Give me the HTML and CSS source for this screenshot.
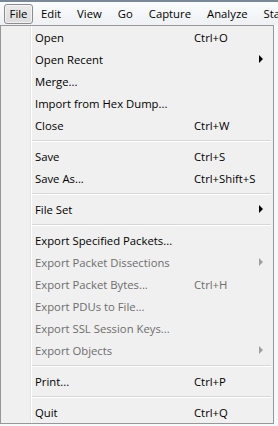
FILE: index.html
```html
<!DOCTYPE html>
<html lang="en">
<head>
    <meta charset="UTF-8">
    <title>File menu</title>
    <link rel="stylesheet" href="styles.css">
</head>
<body>
    <div class="frame"></div>
    <div class="menubar">
        <span class="top-item active">File</span>
        <span class="top-item">Edit</span>
        <span class="top-item">View</span>
        <span class="top-item">Go</span>
        <span class="top-item">Capture</span>
        <span class="top-item">Analyze</span>
        <span class="top-item">Statistics</span>
    </div>
    <div class="menu">
        <div class="item"><span class="label">Open</span><span class="key">Ctrl+O</span></div>
        <div class="item"><span class="label">Open Recent</span><span class="arrow"></span></div>
        <div class="item"><span class="label">Merge...</span></div>
        <div class="item"><span class="label">Import from Hex Dump...</span></div>
        <div class="item"><span class="label">Close</span><span class="key">Ctrl+W</span></div>
        <div class="sep"></div>
        <div class="item"><span class="label">Save</span><span class="key">Ctrl+S</span></div>
        <div class="item"><span class="label">Save As...</span><span class="key">Ctrl+Shift+S</span></div>
        <div class="sep"></div>
        <div class="item"><span class="label">File Set</span><span class="arrow"></span></div>
        <div class="sep"></div>
        <div class="item"><span class="label">Export Specified Packets...</span></div>
        <div class="item disabled"><span class="label">Export Packet Dissections</span><span class="arrow"></span></div>
        <div class="item disabled"><span class="label">Export Packet Bytes...</span><span class="key">Ctrl+H</span></div>
        <div class="item disabled"><span class="label">Export PDUs to File...</span></div>
        <div class="item disabled"><span class="label">Export SSL Session Keys...</span></div>
        <div class="item disabled"><span class="label">Export Objects</span><span class="arrow"></span></div>
        <div class="sep"></div>
        <div class="item"><span class="label">Print...</span><span class="key">Ctrl+P</span></div>
        <div class="sep"></div>
        <div class="item"><span class="label">Quit</span><span class="key">Ctrl+Q</span></div>
    </div>
</body>
</html>
```

FILE: styles.css
```css
body {
    margin: 0;
    padding: 0;
    width: 278px;
    height: 426px;
    overflow: hidden;
    background-color: #f7f8f9;
    font-family: "Open Sans", "Noto Sans", sans-serif;
    font-size: 11.3px;
    color: #000;
}
.frame {
    height: 2px;
    background-color: #7a8796;
}
.menubar {
    height: 23px;
    display: flex;
    align-items: center;
    padding-left: 4px;
    white-space: nowrap;
    overflow: hidden;
    background: linear-gradient(#fbfcfd, #eef1f5);
}
.top-item {
    flex: none;
    padding: 1px 7px 2px 7px;
    border: 1px solid transparent;
    border-radius: 3px;
}
.top-item.active {
    box-sizing: border-box;
    width: 29px;
    height: 20px;
    padding: 1px 0 0 0;
    text-align: center;
    margin-top: 1px;
    border-color: #8a8c8f;
    background: linear-gradient(#eaeaea, #dcdcdc);
    box-shadow: inset 0 0 0 1px rgba(255, 255, 255, 0.6);
}
.menu {
    box-sizing: border-box;
    width: 274px;
    height: 399px;
    padding: 0 1px;
    border: 1px solid #979797;
    background-color: #f0f0f0;
    background-image: linear-gradient(90deg, transparent 29px, #e2e3e3 29px, #e2e3e3 30px, #ffffff 30px, #ffffff 31px, transparent 31px);
}
.item {
    display: grid;
    grid-template-columns: 159px 64px 1fr;
    align-items: center;
    height: 22px;
    padding-left: 33px;
    white-space: nowrap;
}
.label {
    grid-column: 1;
}
.key {
    grid-column: 2;
}
.arrow {
    grid-column: 3;
    justify-self: start;
    margin-left: 1px;
    width: 0;
    height: 0;
    border-top: 4px solid transparent;
    border-bottom: 4px solid transparent;
    border-left: 4px solid #000;
}
.item.disabled {
    color: #6d6d6d;
}
.item.disabled .arrow {
    border-left-color: #a0a0a0;
}
.sep {
    height: 9px;
    margin-left: 30px;
    margin-right: 1px;
    background: linear-gradient(transparent 4px, #d7d7d7 4px, #d7d7d7 5px, #ffffff 5px, #ffffff 6px, transparent 6px);
}
```
